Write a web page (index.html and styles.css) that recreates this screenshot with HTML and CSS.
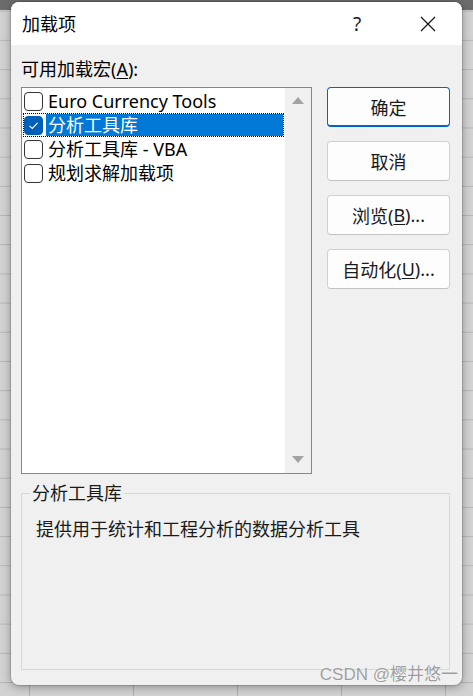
FILE: index.html
```html
<!DOCTYPE html>
<html lang="zh-CN">
<head>
<meta charset="utf-8">
<title>加载项</title>
<link rel="stylesheet" href="styles.css">
</head>
<body>
<div class="dialog">
  <div class="titlebar">
    <div class="title">加载项</div>
    <div class="help">?</div>
    <div class="close">
      <svg width="16" height="16" viewBox="0 0 16 16"><path d="M1 1 L15 15 M15 1 L1 15" stroke="#1a1a1a" stroke-width="1.3" fill="none"/></svg>
    </div>
  </div>
  <div class="content">
    <div class="label">可用加载宏(<u>A</u>):</div>
    <div class="main">
      <div class="listbox">
        <div class="items">
          <div class="item"><span class="cb"></span><span class="text">Euro Currency Tools</span></div>
          <div class="item sel"><span class="cb on"><svg width="13" height="13" viewBox="0 0 13 13"><path d="M2.5 6.8 L5.3 9.4 L10.6 3.8" stroke="#fff" stroke-width="1.1" fill="none"/></svg></span><span class="text">分析工具库</span></div>
          <div class="item"><span class="cb"></span><span class="text">分析工具库 - VBA</span></div>
          <div class="item"><span class="cb"></span><span class="text">规划求解加载项</span></div>
        </div>
        <div class="scrollbar">
          <span class="arrow up"></span>
          <span class="arrow down"></span>
        </div>
      </div>
      <div class="buttons">
        <div class="btn default">确定</div>
        <div class="btn">取消</div>
        <div class="btn">浏览(<u>B</u>)...</div>
        <div class="btn">自动化(<u>U</u>)...</div>
      </div>
    </div>
    <fieldset class="group">
      <legend>分析工具库</legend>
      <div class="desc">提供用于统计和工程分析的数据分析工具</div>
    </fieldset>
  </div>
  <div class="watermark">CSDN @樱井悠一</div>
</div>
</body>
</html>
```
FILE: styles.css
```css
html, body {
  margin: 0;
  padding: 0;
}
body {
  width: 473px;
  height: 696px;
  overflow: hidden;
  background-color: #d2d2d2;
  background-image:
    linear-gradient(#6c6c6c 0, #6c6c6c 10px, transparent 10px),
    linear-gradient(90deg, transparent 29px, #b0b0b0 29px, #b0b0b0 30px, transparent 30px),
    linear-gradient(transparent 11px, #b6b6b6 11px, #b6b6b6 12px, transparent 12px);
  background-size: 100% 100%, 104px 100%, 100% 29.2px;
  background-repeat: no-repeat, repeat-x, repeat-y;
  font-family: "Noto Sans", "Noto Sans CJK SC", sans-serif;
  color: #000;
  padding-top: 2px;
  padding-left: 11px;
  box-sizing: border-box;
}
.dialog {
  position: relative;
  width: 451px;
  height: 683px;
  background: #f0f0f0;
  border-radius: 8px;
  overflow: hidden;
  box-shadow: 0 2px 10px rgba(0,0,0,0.35), 0 0 0 1px rgba(0,0,0,0.12);
  display: flex;
  flex-direction: column;
}
.titlebar {
  height: 43px;
  background: #fff;
  display: flex;
  align-items: center;
  padding-left: 11px;
  flex: none;
}
.title {
  flex: 1;
  font-size: 18px;
  line-height: 24px;
}
.help {
  width: 12px;
  font-size: 19px;
  line-height: 24px;
  margin-right: 55px;
  color: #1a1a1a;
}
.close {
  width: 16px;
  height: 16px;
  margin-right: 26px;
  display: flex;
}
.content {
  flex: 1;
  display: flex;
  flex-direction: column;
  padding: 12px 12px 15px 10px;
}
.label {
  font-size: 18px;
  line-height: 24px;
  height: 24px;
  margin-bottom: 6px;
}
u {
  text-decoration-thickness: 1px;
  text-underline-offset: 2px;
}
.main {
  display: flex;
  gap: 15px;
}
.listbox {
  width: 291px;
  height: 387px;
  box-sizing: border-box;
  border: 1px solid #828790;
  background: #fff;
  display: flex;
}
.items {
  flex: 1;
  padding: 1px;
}
.item {
  height: 24px;
  box-sizing: border-box;
  border: 1px dotted transparent;
  display: flex;
  align-items: center;
  font-size: 18px;
}
.item.sel {
  border-color: #000;
}
.cb {
  width: 19px;
  height: 19px;
  box-sizing: border-box;
  border: 1px solid #333;
  border-radius: 4px;
  background: #fff;
  flex: none;
  display: flex;
  align-items: center;
  justify-content: center;
}
.cb.on {
  background: #005fb8;
  border-color: #005fb8;
}
.text {
  flex: 1;
  margin-left: 3px;
  padding-left: 2px;
  height: 22px;
  line-height: 22px;
  white-space: nowrap;
}
.item.sel .text {
  background: #0078d7;
  color: #fff;
}
.scrollbar {
  width: 26px;
  background: #f0f0f0;
  display: flex;
  flex-direction: column;
  justify-content: space-between;
  align-items: center;
  padding: 9px 0 10px;
}
.arrow {
  width: 0;
  height: 0;
  border-left: 6px solid transparent;
  border-right: 6px solid transparent;
}
.arrow.up {
  border-bottom: 7px solid #a3a3a3;
}
.arrow.down {
  border-top: 7px solid #a3a3a3;
}
.buttons {
  width: 123px;
  display: flex;
  flex-direction: column;
  gap: 14px;
}
.btn {
  height: 40px;
  box-sizing: border-box;
  border: 1px solid #d0d0d0;
  border-bottom-color: #c2c2c2;
  border-radius: 4px;
  background: #fdfdfd;
  display: flex;
  align-items: center;
  justify-content: center;
  font-size: 18px;
  color: #1a1a1a;
}
.btn.default {
  border-color: #0067c0;
  border-bottom-width: 2px;
}
.group {
  flex: 1;
  margin: 7px 0 0 0;
  padding: 0 14px;
  border: 1px solid #d9d9d9;
  min-width: 0;
}
.group legend {
  font-size: 18px;
  line-height: 24px;
  padding: 0 2px;
  margin-left: -6px;
  color: #1a1a1a;
}
.desc {
  font-size: 18px;
  line-height: 24px;
  margin-top: 12px;
  color: #1a1a1a;
}
.watermark {
  position: absolute;
  right: 4px;
  bottom: 0px;
  font-family: "Liberation Sans", "Noto Sans CJK SC", sans-serif;
  font-size: 17px;
  line-height: 20px;
  color: rgba(140,140,140,0.85);
  text-shadow: 0 0 1px rgba(255,255,255,0.9);
}
```
